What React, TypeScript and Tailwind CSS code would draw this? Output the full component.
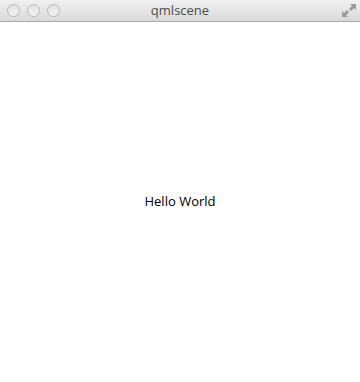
export default function App() {
  return (
    <div className="flex h-[382px] w-[360px] flex-col bg-white font-['Open_Sans',sans-serif]">
      {/* Title bar */}
      <div className="relative flex h-[22px] shrink-0 items-center justify-center border-b border-[#a9a9a9] bg-gradient-to-b from-[#f0f0f0] to-[#d9d9d9]">
        <div className="absolute left-[7px] top-[4px] flex gap-[7px]">
          <span className="h-[13px] w-[13px] rounded-full border border-[#b5b5b5] bg-gradient-to-b from-[#e2e2e2] to-[#f3f3f3]" />
          <span className="h-[13px] w-[13px] rounded-full border border-[#b5b5b5] bg-gradient-to-b from-[#e2e2e2] to-[#f3f3f3]" />
          <span className="h-[13px] w-[13px] rounded-full border border-[#b5b5b5] bg-gradient-to-b from-[#e2e2e2] to-[#f3f3f3]" />
        </div>
        <span className="text-[13px] leading-none text-[#4d4d4d]">qmlscene</span>
        <svg className="absolute right-[3px] top-[3px]" width="16" height="15" viewBox="0 0 16 15">
          <path d="M9 1h6v6l-2-2-3 3-2-2 3-3z" fill="#9a9a9a" />
          <path d="M1 14V8l2 2 3-3 2 2-3 3 2 2z" fill="#9a9a9a" />
        </svg>
      </div>
      {/* Content */}
      <div className="flex flex-1 items-center justify-center">
        <span className="text-[13px] text-black">Hello World</span>
      </div>
    </div>
  )
}
